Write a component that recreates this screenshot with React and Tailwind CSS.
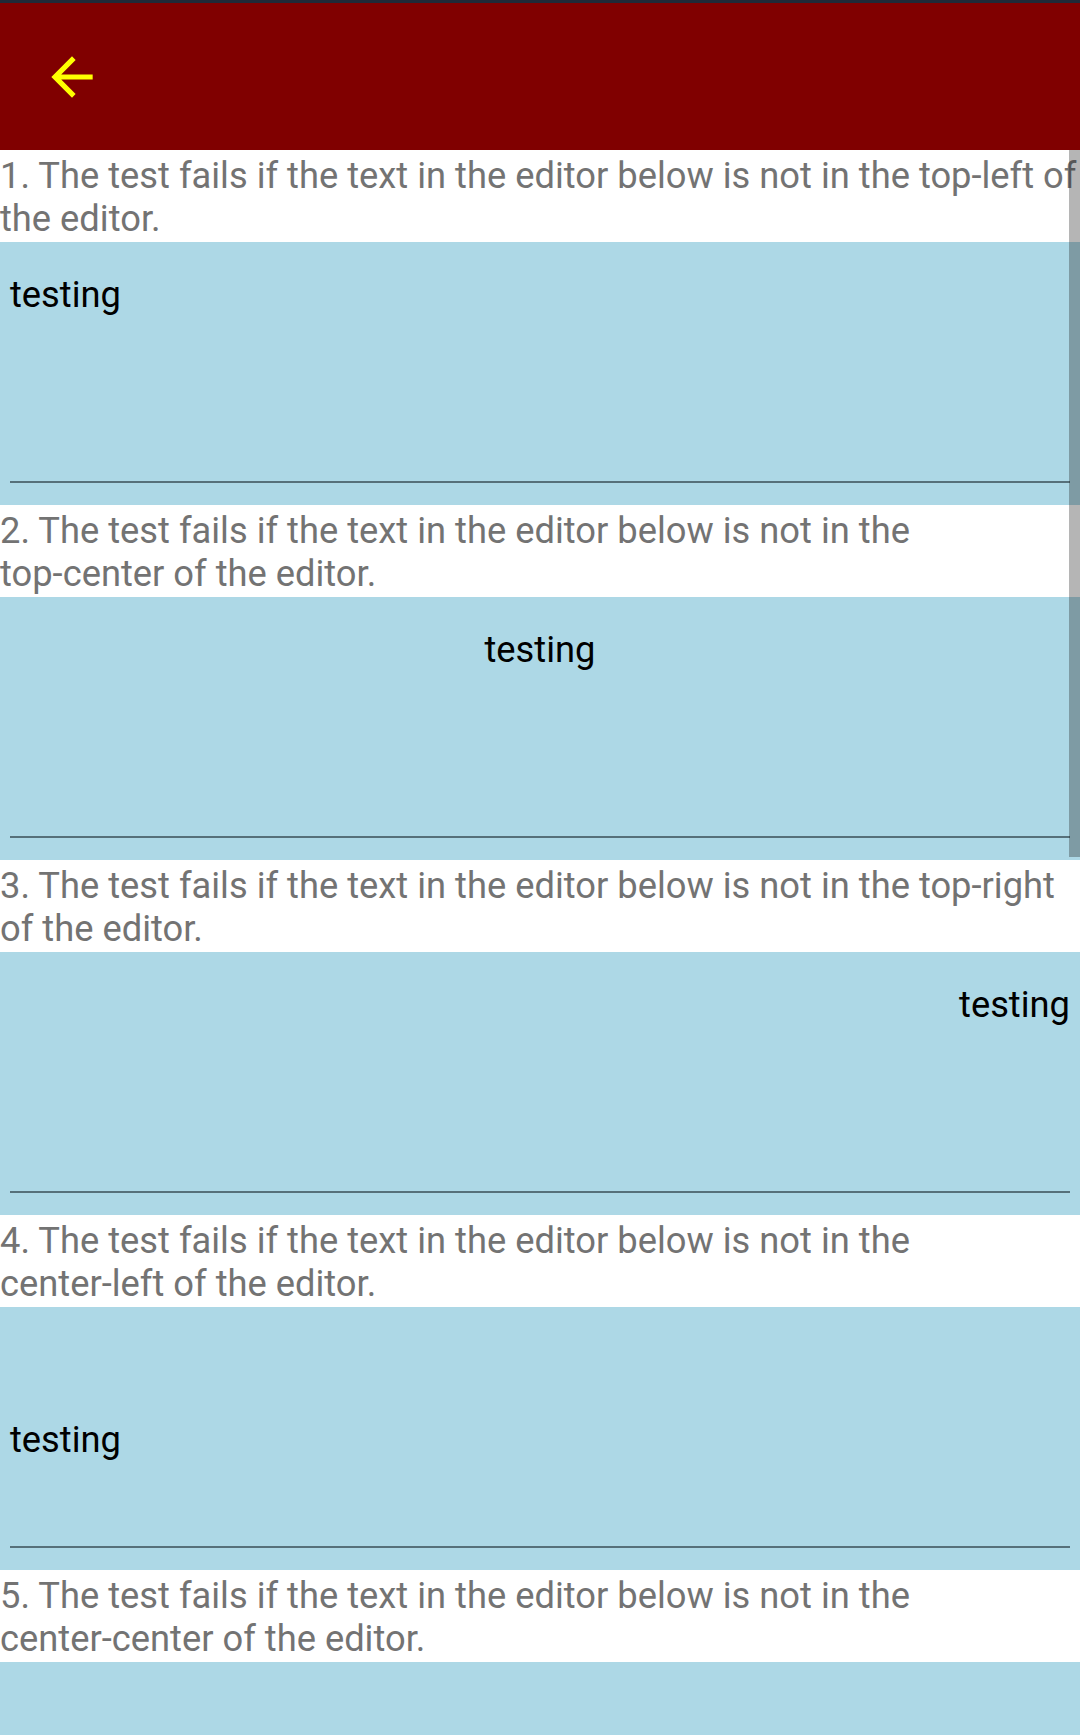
import React from "react";

const tests = [
  { n: 1, lines: ["1. The test fails if the text in the editor below is not in the top-left of", "the editor."], align: "items-start justify-start" },
  { n: 2, lines: ["2. The test fails if the text in the editor below is not in the", "top-center of the editor."], align: "items-start justify-center" },
  { n: 3, lines: ["3. The test fails if the text in the editor below is not in the top-right", "of the editor."], align: "items-start justify-end" },
  { n: 4, lines: ["4. The test fails if the text in the editor below is not in the", "center-left of the editor."], align: "items-center justify-start" },
  { n: 5, lines: ["5. The test fails if the text in the editor below is not in the", "center-center of the editor."], align: "items-center justify-center" },
];

const BackArrow = () => (
  <svg width="62" height="62" viewBox="0 0 24 24" fill="#ffff00">
    <path d="M20 11H7.83l5.59-5.59L12 4l-8 8 8 8 1.41-1.41L7.83 13H20v-2z" />
  </svg>
);

const App = () => {
  return (
    <div className="relative w-full h-[1735px] overflow-hidden bg-white font-['Roboto',sans-serif]">
      {/* status strip + toolbar */}
      <div className="h-[3px] bg-[#1f2a38]"></div>
      <header className="h-[147px] bg-[#800000] flex items-center pl-[41px]">
        <BackArrow />
      </header>

      {tests.map((t) => (
        <section key={t.n}>
          <div className="h-[92px] pt-[4px] text-[36.3px] leading-[43px] text-[#737373] whitespace-nowrap">
            {t.lines[0]}
            <br />
            {t.lines[1]}
          </div>
          <div className="h-[263px] bg-[#add8e6] pt-[31px] flex flex-col">
            <div className={`h-[203px] px-[10px] flex ${t.align}`}>
              <span className="text-[36.3px] leading-[43px] text-black">testing</span>
            </div>
            <div className="mt-[5px] mx-[10px] h-[2px] bg-[#56707a]"></div>
          </div>
        </section>
      ))}

      {/* overlay scrollbar */}
      <div className="absolute right-0 top-[150px] w-[11px] h-[707px] bg-[rgba(30,30,30,0.33)]"></div>
    </div>
  );
};

export default App;
